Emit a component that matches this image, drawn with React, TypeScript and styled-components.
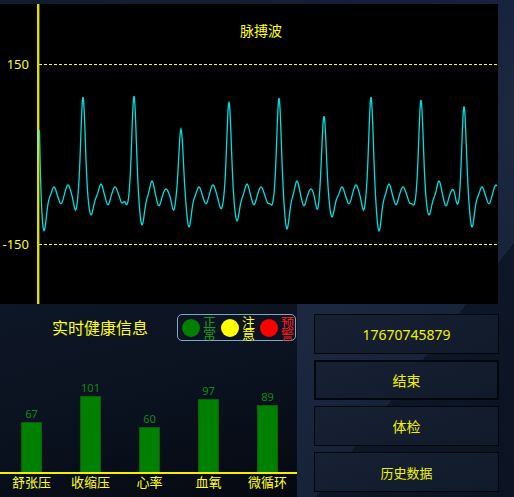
import React from 'react';
import styled, { createGlobalStyle } from 'styled-components';

const GlobalStyle = createGlobalStyle`
  body {
    margin: 0;
    background: #0f1828;
    font-family: 'Noto Sans', 'Noto Sans CJK SC', sans-serif;
  }
`;

const Page = styled.div`
  width: 514px;
  height: 497px;
  overflow: hidden;
  padding-top: 4px;
  box-sizing: border-box;
  background:
    linear-gradient(128deg, transparent 0 78%, rgba(6, 12, 24, 0.55) 78% 100%),
    linear-gradient(135deg, #111b2e 0%, #14203a 40%, #1b2840 62%, #121c2f 100%);
`;

const ChartPanel = styled.div`
  width: 498px;
  height: 300px;
  background: #000;
`;

const Bottom = styled.div`
  display: flex;
  height: 193px;
`;

const HealthPanel = styled.div`
  width: 297px;
  display: flex;
  flex-direction: column;
  background: linear-gradient(165deg, #0e1727 0%, #0a111e 55%, #05080f 100%);
`;

const Header = styled.div`
  display: flex;
  align-items: center;
  margin-top: 10px;
  height: 27px;
`;

const Title = styled.div`
  margin-left: 52px;
  width: 125px;
  color: #ffff1a;
  font-size: 16px;
  line-height: 20px;
`;

const Legend = styled.div`
  display: flex;
  align-items: center;
  width: 119px;
  height: 27px;
  box-sizing: border-box;
  border: 1px solid #7ea9c6;
  border-radius: 5px;
  padding-left: 4px;
`;

const Dot = styled.span<{ $color: string }>`
  width: 18px;
  height: 18px;
  border-radius: 50%;
  background: ${({ $color }) => $color};
  flex-shrink: 0;
`;

const LegendText = styled.span<{ $color: string }>`
  width: 13px;
  margin: 1px 5px 0 3px;
  font-size: 13px;
  line-height: 12.5px;
  color: ${({ $color }) => $color};
  word-break: break-all;
`;

const Bars = styled.div`
  display: flex;
  align-items: flex-end;
  height: 131px;
  padding-left: 2px;
  border-bottom: 2px solid #f0f000;
`;

const BarColumn = styled.div`
  width: 60px;
  display: flex;
  flex-direction: column;
  align-items: center;
`;

const BarValue = styled.span`
  color: #138a13;
  font-size: 11px;
  line-height: 13px;
  margin-bottom: 2px;
`;

const Bar = styled.div`
  width: 21px;
  box-sizing: border-box;
  background: #008000;
  border: 1px solid #0c5c0c;
  border-bottom: none;
`;

const Labels = styled.div`
  display: flex;
  padding-left: 2px;
`;

const BarLabel = styled.span`
  width: 60px;
  text-align: center;
  color: #ffff1a;
  font-size: 13px;
  line-height: 16px;
`;

const Buttons = styled.div`
  margin-left: 17px;
  padding-top: 10px;
  width: 185px;
  display: flex;
  flex-direction: column;
  gap: 6px;
`;

const Button = styled.button<{ $thick?: boolean; $size?: number }>`
  height: 40px;
  box-sizing: border-box;
  border: ${({ $thick }) => ($thick ? '2px' : '1px')} solid #03060b;
  background: linear-gradient(160deg, #172134 0%, #111a2a 100%);
  color: #f2f200;
  font-family: 'Noto Sans', 'Noto Sans CJK SC', sans-serif;
  font-size: ${({ $size }) => $size ?? 14}px;
  padding: 0;
  cursor: pointer;
`;

const beats = [
  { c: 36, p: -60, t: 34 },
  { c: 83, p: 97, t: 18 },
  { c: 134, p: 96, t: 28 },
  { c: 181, p: 129, t: 30 },
  { c: 229, p: 102, t: 24 },
  { c: 279, p: 98, t: 32 },
  { c: 324, p: 116, t: 20 },
  { c: 371, p: 97, t: 34 },
  { c: 421, p: 100, t: 18 },
  { c: 464, p: 106, t: 30 },
];

const g = (d: number, w: number) => Math.exp(-(d / w) * (d / w));

const wave = () => {
  const base = 197;
  const pts: string[] = [];
  for (let x = 39.5; x <= 497; x += 0.5) {
    let y = base;
    beats.forEach(({ c, p, t }, i) => {
      const d = x - c;
      const k = i % 3;
      y -= (base - p) * g(d, 3.1);
      y += t * g(d - 8, 3.2);
      y -= (10 + k * 3) * g(d - 18, 3);
      y += (7 + k) * g(d - 25, 2.6);
      y -= (8 + (2 - k) * 2) * g(d - 32, 3.4);
      y += 6 * g(d - 39, 2.4);
      y += 8 * g(d + 7, 2.4);
    });
    pts.push(`${x},${(y - 4).toFixed(1)}`);
  }
  return 'M' + pts.join(' L');
};

const PulseChart = () => (
  <svg width="498" height="300" viewBox="0 0 498 300">
    <text x="261" y="32" fill="#ffff1a" fontSize="14" textAnchor="middle" fontFamily="'Noto Sans CJK SC', sans-serif">
      脉搏波
    </text>
    <line x1="39" y1="60.5" x2="497" y2="60.5" stroke="#ffff00" strokeWidth="1" strokeDasharray="3 2" />
    <line x1="39" y1="240.5" x2="497" y2="240.5" stroke="#ffff00" strokeWidth="1" strokeDasharray="3 2" />
    <text x="29" y="65" fill="#ffff1a" fontSize="13" textAnchor="end" fontFamily="'Noto Sans', sans-serif">150</text>
    <text x="29" y="245" fill="#ffff1a" fontSize="13" textAnchor="end" fontFamily="'Noto Sans', sans-serif">-150</text>
    <rect x="37" y="0" width="2.4" height="300" fill="#dddd00" />
    <path d={wave()} fill="none" stroke="#00dede" strokeWidth="1.3" />
  </svg>
);

const metrics = [
  { label: '舒张压', value: 67 },
  { label: '收缩压', value: 101 },
  { label: '心率', value: 60 },
  { label: '血氧', value: 97 },
  { label: '微循环', value: 89 },
];

const legend = [
  { dot: '#008000', text: '正常', color: '#1a9a1a' },
  { dot: '#ffff00', text: '注意', color: '#ffff1a' },
  { dot: '#ff0000', text: '预警', color: '#ff1a1a' },
];

export default function App() {
  return (
    <>
      <GlobalStyle />
      <Page>
        <ChartPanel>
          <PulseChart />
        </ChartPanel>
        <Bottom>
          <HealthPanel>
            <Header>
              <Title>实时健康信息</Title>
              <Legend>
                {legend.map((l) => (
                  <React.Fragment key={l.text}>
                    <Dot $color={l.dot} />
                    <LegendText $color={l.color}>{l.text}</LegendText>
                  </React.Fragment>
                ))}
              </Legend>
            </Header>
            <Bars>
              {metrics.map((m) => (
                <BarColumn key={m.label}>
                  <BarValue>{m.value}</BarValue>
                  <Bar style={{ height: Math.round(m.value * 0.75) }} />
                </BarColumn>
              ))}
            </Bars>
            <Labels>
              {metrics.map((m) => (
                <BarLabel key={m.label}>{m.label}</BarLabel>
              ))}
            </Labels>
          </HealthPanel>
          <Buttons>
            <Button>17670745879</Button>
            <Button $thick>结束</Button>
            <Button>体检</Button>
            <Button $size={13}>历史数据</Button>
          </Buttons>
        </Bottom>
      </Page>
    </>
  );
}
